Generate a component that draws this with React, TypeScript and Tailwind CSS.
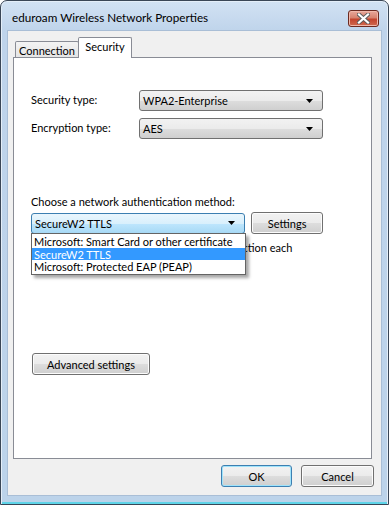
import React from "react";

const font = { fontFamily: 'Lato, "Segoe UI", "Noto Sans", Arial, sans-serif' };

const Arrow = () => (
  <svg width="7" height="4" viewBox="0 0 7 4" className="shrink-0">
    <path d="M0 0h7L3.5 4z" fill="#000" />
  </svg>
);

const Combo = ({ value, focused }: { value: string; focused?: boolean }) => (
  <div
    className={
      focused
        ? "h-[21px] w-full flex items-center justify-between pl-[3px] pr-[9px] rounded-[3px] border border-[#3c7fb1] bg-[linear-gradient(#eaf6fd_0%,#d9f0fc_50%,#bee6fd_51%,#a7d9f5_100%)]"
        : "h-[21px] w-full flex items-center justify-between pl-[3px] pr-[9px] rounded-[3px] border border-[#707070] bg-[linear-gradient(#f2f2f2_0%,#ebebeb_50%,#dddddd_51%,#cfcfcf_100%)]"
    }
  >
    <span className="leading-none whitespace-nowrap">{value}</span>
    <Arrow />
  </div>
);

const Button = ({ label, className, isDefault }: { label: string; className?: string; isDefault?: boolean }) => (
  <div
    className={
      (isDefault
        ? "border-[#3c7fb1] shadow-[inset_0_0_0_1px_#9fe3fb] "
        : "border-[#707070] shadow-[inset_0_0_0_1px_#fcfcfc] ") +
      "h-[22px] flex items-center justify-center rounded-[3px] border bg-[linear-gradient(#f2f2f2_0%,#ebebeb_50%,#dddddd_51%,#cfcfcf_100%)] " +
      (className ?? "")
    }
  >
    <span className="leading-none whitespace-nowrap">{label}</span>
  </div>
);

export default function App() {
  return (
    <div className="w-[389px] h-[505px] bg-white text-[11px] text-black" style={font}>
      <div className="w-[389px] h-[505px] flex flex-col rounded-t-[7px] border border-[#3a4656] bg-[linear-gradient(#d2e2f3_0%,#bfd4eb_30px,#bcd3ea_100%)] shadow-[inset_0_0_0_1px_#e4eef8]">
        {/* title bar */}
        <div className="h-[29px] shrink-0 flex items-center justify-between pl-[11px] pr-[9px]">
          <span className="text-[11.7px] leading-none pt-[4px] whitespace-nowrap">eduroam Wireless Network Properties</span>
          <div className="mt-[6px] w-[31px] h-[17px] rounded-[3px] border border-[#6b2a20] bg-[linear-gradient(#e8a89b_0%,#d7836f_45%,#c3442e_55%,#cf6a4f_100%)] shadow-[inset_0_0_0_1px_#f0b8aa] flex items-center justify-center">
            <svg width="13" height="11" viewBox="0 0 13 11">
              <path d="M2 1.5l9 8M11 1.5l-9 8" stroke="#5a5a5a" strokeWidth="4" strokeLinecap="square" />
              <path d="M2 1.5l9 8M11 1.5l-9 8" stroke="#ffffff" strokeWidth="2.2" strokeLinecap="square" />
            </svg>
          </div>
        </div>

        {/* client area */}
        <div className="mx-[6px] mb-[6px] h-[467px] bg-[#f0f0f0] border border-[#a9bed6] flex flex-col px-[5px] pt-[6px]">
          {/* tabs */}
          <div className="flex items-end h-[21px] pl-[2px] -mb-px relative z-10">
            <div className="h-[16px] w-[64px] border border-b-0 border-[#898c95] rounded-t-[2px] bg-[linear-gradient(#f3f3f3,#e5e5e5)] flex items-center justify-center mb-px">
              <span className="leading-none pt-[1px] whitespace-nowrap">Connection</span>
            </div>
            <div className="h-[21px] w-[54px] -ml-px border border-b-0 border-[#898c95] rounded-t-[2px] bg-white flex items-start justify-center pt-[3px]">
              <span className="leading-none whitespace-nowrap">Security</span>
            </div>
          </div>

          {/* panel */}
          <div className="relative h-[402px] w-[359px] border border-[#898c95] bg-white pl-[17px] pr-[48px] pt-[32px] flex flex-col">
            <div className="flex items-center">
              <span className="w-[108px] whitespace-nowrap">Security type:</span>
              <div className="flex-1">
                <Combo value="WPA2-Enterprise" />
              </div>
            </div>
            <div className="flex items-center mt-[7px]">
              <span className="w-[108px] whitespace-nowrap">Encryption type:</span>
              <div className="flex-1">
                <Combo value="AES" />
              </div>
            </div>

            <div className="mt-[57px] leading-none whitespace-nowrap">Choose a network authentication method:</div>
            <div className="relative mt-[5px] flex items-center gap-[6px]">
              <div className="w-[215px]">
                <Combo value="SecureW2 TTLS" focused />
              </div>
              <Button label="Settings" className="w-[72px]" />

              {/* open dropdown list */}
              <div className="absolute left-0 top-[21px] w-[215px] z-20 bg-white border border-[#646464] shadow-[3px_3px_3px_rgba(0,0,0,0.35)] py-px whitespace-nowrap">
                <div className="h-[13px] px-[2px] flex items-center leading-none">Microsoft: Smart Card or other certificate</div>
                <div className="h-[12px] px-[2px] flex items-center leading-none bg-[#3399ff] text-white">SecureW2 TTLS</div>
                <div className="h-[13px] px-[2px] flex items-center leading-none">Microsoft: Protected EAP (PEAP)</div>
              </div>
            </div>

            <div className="mt-[7px] flex items-start gap-[5px]">
              <div className="mt-[1px] w-[13px] h-[13px] shrink-0 border border-[#8e8f8f] bg-[linear-gradient(135deg,#dcdcdc,#ffffff)]" />
              <span className="leading-[14px] whitespace-nowrap">
                Remember my credentials for this connection each
                <br />
                time I'm logged on
              </span>
            </div>

            <div className="mt-[84px] pl-px">
              <Button label="Advanced settings" className="w-[118px]" />
            </div>
          </div>

          {/* bottom buttons */}
          <div className="flex justify-end gap-[9px] mt-[6px] pr-[2px]">
            <Button label="OK" className="w-[71px]" isDefault />
            <Button label="Cancel" className="w-[73px]" />
          </div>
        </div>
        <div className="mt-auto h-[2px] bg-[#5fd4e8] mx-px" />
      </div>
    </div>
  );
}
